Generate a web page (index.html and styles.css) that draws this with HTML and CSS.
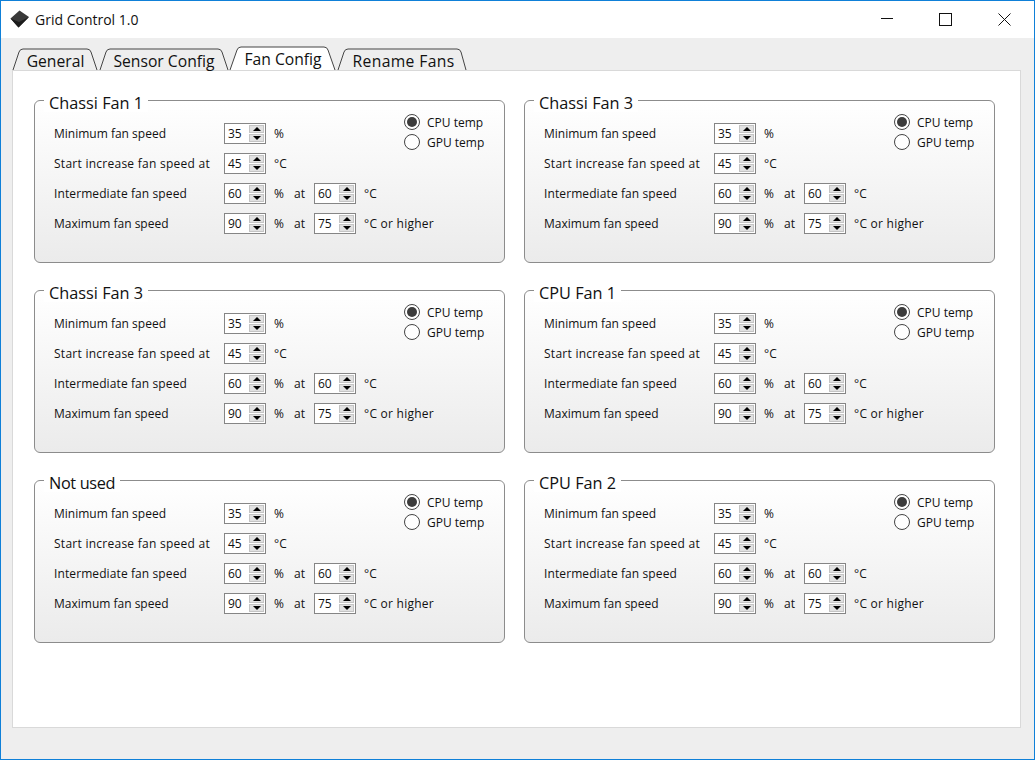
FILE: index.html
```html
<!DOCTYPE html>
<html lang="en">
<head>
    <meta charset="UTF-8">
    <meta name="viewport" content="width=device-width, initial-scale=1.0">
    <title>Grid Control 1.0</title>
    <link rel="stylesheet" href="styles.css">
</head>
<body>
<div class="window">
    <div class="titlebar">
        <svg class="app-icon" width="20" height="20" viewBox="0 0 20 20"><path d="M0.5 8.5 L9.5 0.5 L19 7 L8.5 17.5 Z" fill="#3a3a3a"/><path d="M0.5 8.5 L8.5 17.5 L19 7 L9 12 Z" fill="#1c1c1c"/></svg>
        <span class="app-name">Grid Control 1.0</span>
        <div class="win-btn"><svg width="13" height="13" viewBox="0 0 13 13"><path d="M1 5.5 H13" stroke="#111" fill="none"/></svg></div>
        <div class="win-btn"><svg width="13" height="13" viewBox="0 0 13 13"><rect x="0.5" y="0.5" width="12" height="12" stroke="#111" fill="none"/></svg></div>
        <div class="win-btn"><svg width="13" height="13" viewBox="0 0 13 13"><path d="M0.5 0.5 L12.5 12.5 M12.5 0.5 L0.5 12.5" stroke="#111" fill="none"/></svg></div>
    </div>
    <div class="main">
        <div class="tabs">
            <div class="tab tab-general">
                <svg width="87" height="24" viewBox="0 0 87 24"><path d="M1 23 L7 5 Q8 2 11 2 H75 Q78 2 79 5 L85 23" fill="#eee" stroke="#444"/></svg>
                <span>General</span>
            </div>
            <div class="tab tab-sensor">
                <svg width="131" height="24" viewBox="0 0 131 24"><path d="M1 23 L7 5 Q8 2 11 2 H119 Q122 2 123 5 L129 23" fill="#eee" stroke="#444"/></svg>
                <span>Sensor Config</span>
            </div>
            <div class="tab tab-fan active">
                <svg width="109" height="25" viewBox="0 0 109 25"><path d="M1 24 L8 4 Q9 1 12 1 H95 Q98 1 99 4 L106 24" fill="#fff" stroke="#444"/></svg>
                <span>Fan Config</span>
            </div>
            <div class="tab tab-rename">
                <svg width="131" height="24" viewBox="0 0 131 24"><path d="M1 23 L7 5 Q8 2 11 2 H120 Q123 2 124 5 L129 23" fill="#eee" stroke="#444"/></svg>
                <span>Rename Fans</span>
            </div>
        </div>
        <div class="pane">
            <div class="fan-grid">

                <div class="card">
                    <div class="card-title">Chassi Fan 1</div>
                    <div class="rows">
                        <div class="row"><span class="row-label">Minimum fan speed</span><div class="spin"><span class="spin-val">35</span><div class="spin-btns"><div class="spin-btn"><i class="arrow-up"></i></div><div class="spin-btn"><i class="arrow-down"></i></div></div></div><span class="unit">%</span></div>
                        <div class="row"><span class="row-label">Start increase fan speed at</span><div class="spin"><span class="spin-val">45</span><div class="spin-btns"><div class="spin-btn"><i class="arrow-up"></i></div><div class="spin-btn"><i class="arrow-down"></i></div></div></div><span>°C</span></div>
                        <div class="row"><span class="row-label">Intermediate fan speed</span><div class="spin"><span class="spin-val">60</span><div class="spin-btns"><div class="spin-btn"><i class="arrow-up"></i></div><div class="spin-btn"><i class="arrow-down"></i></div></div></div><span class="unit">%</span><span class="unit">at</span><div class="spin"><span class="spin-val">60</span><div class="spin-btns"><div class="spin-btn"><i class="arrow-up"></i></div><div class="spin-btn"><i class="arrow-down"></i></div></div></div><span>°C</span></div>
                        <div class="row"><span class="row-label">Maximum fan speed</span><div class="spin"><span class="spin-val">90</span><div class="spin-btns"><div class="spin-btn"><i class="arrow-up"></i></div><div class="spin-btn"><i class="arrow-down"></i></div></div></div><span class="unit">%</span><span class="unit">at</span><div class="spin"><span class="spin-val">75</span><div class="spin-btns"><div class="spin-btn"><i class="arrow-up"></i></div><div class="spin-btn"><i class="arrow-down"></i></div></div></div><span class="unit-long">°C or higher</span></div>
                    </div>
                    <div class="radios">
                        <div class="radio on"><span class="radio-dot"></span><span>CPU temp</span></div>
                        <div class="radio"><span class="radio-dot"></span><span>GPU temp</span></div>
                    </div>
                </div>

                <div class="card">
                    <div class="card-title">Chassi Fan 3</div>
                    <div class="rows">
                        <div class="row"><span class="row-label">Minimum fan speed</span><div class="spin"><span class="spin-val">35</span><div class="spin-btns"><div class="spin-btn"><i class="arrow-up"></i></div><div class="spin-btn"><i class="arrow-down"></i></div></div></div><span class="unit">%</span></div>
                        <div class="row"><span class="row-label">Start increase fan speed at</span><div class="spin"><span class="spin-val">45</span><div class="spin-btns"><div class="spin-btn"><i class="arrow-up"></i></div><div class="spin-btn"><i class="arrow-down"></i></div></div></div><span>°C</span></div>
                        <div class="row"><span class="row-label">Intermediate fan speed</span><div class="spin"><span class="spin-val">60</span><div class="spin-btns"><div class="spin-btn"><i class="arrow-up"></i></div><div class="spin-btn"><i class="arrow-down"></i></div></div></div><span class="unit">%</span><span class="unit">at</span><div class="spin"><span class="spin-val">60</span><div class="spin-btns"><div class="spin-btn"><i class="arrow-up"></i></div><div class="spin-btn"><i class="arrow-down"></i></div></div></div><span>°C</span></div>
                        <div class="row"><span class="row-label">Maximum fan speed</span><div class="spin"><span class="spin-val">90</span><div class="spin-btns"><div class="spin-btn"><i class="arrow-up"></i></div><div class="spin-btn"><i class="arrow-down"></i></div></div></div><span class="unit">%</span><span class="unit">at</span><div class="spin"><span class="spin-val">75</span><div class="spin-btns"><div class="spin-btn"><i class="arrow-up"></i></div><div class="spin-btn"><i class="arrow-down"></i></div></div></div><span class="unit-long">°C or higher</span></div>
                    </div>
                    <div class="radios">
                        <div class="radio on"><span class="radio-dot"></span><span>CPU temp</span></div>
                        <div class="radio"><span class="radio-dot"></span><span>GPU temp</span></div>
                    </div>
                </div>

                <div class="card">
                    <div class="card-title">Chassi Fan 3</div>
                    <div class="rows">
                        <div class="row"><span class="row-label">Minimum fan speed</span><div class="spin"><span class="spin-val">35</span><div class="spin-btns"><div class="spin-btn"><i class="arrow-up"></i></div><div class="spin-btn"><i class="arrow-down"></i></div></div></div><span class="unit">%</span></div>
                        <div class="row"><span class="row-label">Start increase fan speed at</span><div class="spin"><span class="spin-val">45</span><div class="spin-btns"><div class="spin-btn"><i class="arrow-up"></i></div><div class="spin-btn"><i class="arrow-down"></i></div></div></div><span>°C</span></div>
                        <div class="row"><span class="row-label">Intermediate fan speed</span><div class="spin"><span class="spin-val">60</span><div class="spin-btns"><div class="spin-btn"><i class="arrow-up"></i></div><div class="spin-btn"><i class="arrow-down"></i></div></div></div><span class="unit">%</span><span class="unit">at</span><div class="spin"><span class="spin-val">60</span><div class="spin-btns"><div class="spin-btn"><i class="arrow-up"></i></div><div class="spin-btn"><i class="arrow-down"></i></div></div></div><span>°C</span></div>
                        <div class="row"><span class="row-label">Maximum fan speed</span><div class="spin"><span class="spin-val">90</span><div class="spin-btns"><div class="spin-btn"><i class="arrow-up"></i></div><div class="spin-btn"><i class="arrow-down"></i></div></div></div><span class="unit">%</span><span class="unit">at</span><div class="spin"><span class="spin-val">75</span><div class="spin-btns"><div class="spin-btn"><i class="arrow-up"></i></div><div class="spin-btn"><i class="arrow-down"></i></div></div></div><span class="unit-long">°C or higher</span></div>
                    </div>
                    <div class="radios">
                        <div class="radio on"><span class="radio-dot"></span><span>CPU temp</span></div>
                        <div class="radio"><span class="radio-dot"></span><span>GPU temp</span></div>
                    </div>
                </div>

                <div class="card">
                    <div class="card-title">CPU Fan 1</div>
                    <div class="rows">
                        <div class="row"><span class="row-label">Minimum fan speed</span><div class="spin"><span class="spin-val">35</span><div class="spin-btns"><div class="spin-btn"><i class="arrow-up"></i></div><div class="spin-btn"><i class="arrow-down"></i></div></div></div><span class="unit">%</span></div>
                        <div class="row"><span class="row-label">Start increase fan speed at</span><div class="spin"><span class="spin-val">45</span><div class="spin-btns"><div class="spin-btn"><i class="arrow-up"></i></div><div class="spin-btn"><i class="arrow-down"></i></div></div></div><span>°C</span></div>
                        <div class="row"><span class="row-label">Intermediate fan speed</span><div class="spin"><span class="spin-val">60</span><div class="spin-btns"><div class="spin-btn"><i class="arrow-up"></i></div><div class="spin-btn"><i class="arrow-down"></i></div></div></div><span class="unit">%</span><span class="unit">at</span><div class="spin"><span class="spin-val">60</span><div class="spin-btns"><div class="spin-btn"><i class="arrow-up"></i></div><div class="spin-btn"><i class="arrow-down"></i></div></div></div><span>°C</span></div>
                        <div class="row"><span class="row-label">Maximum fan speed</span><div class="spin"><span class="spin-val">90</span><div class="spin-btns"><div class="spin-btn"><i class="arrow-up"></i></div><div class="spin-btn"><i class="arrow-down"></i></div></div></div><span class="unit">%</span><span class="unit">at</span><div class="spin"><span class="spin-val">75</span><div class="spin-btns"><div class="spin-btn"><i class="arrow-up"></i></div><div class="spin-btn"><i class="arrow-down"></i></div></div></div><span class="unit-long">°C or higher</span></div>
                    </div>
                    <div class="radios">
                        <div class="radio on"><span class="radio-dot"></span><span>CPU temp</span></div>
                        <div class="radio"><span class="radio-dot"></span><span>GPU temp</span></div>
                    </div>
                </div>

                <div class="card">
                    <div class="card-title">Not used</div>
                    <div class="rows">
                        <div class="row"><span class="row-label">Minimum fan speed</span><div class="spin"><span class="spin-val">35</span><div class="spin-btns"><div class="spin-btn"><i class="arrow-up"></i></div><div class="spin-btn"><i class="arrow-down"></i></div></div></div><span class="unit">%</span></div>
                        <div class="row"><span class="row-label">Start increase fan speed at</span><div class="spin"><span class="spin-val">45</span><div class="spin-btns"><div class="spin-btn"><i class="arrow-up"></i></div><div class="spin-btn"><i class="arrow-down"></i></div></div></div><span>°C</span></div>
                        <div class="row"><span class="row-label">Intermediate fan speed</span><div class="spin"><span class="spin-val">60</span><div class="spin-btns"><div class="spin-btn"><i class="arrow-up"></i></div><div class="spin-btn"><i class="arrow-down"></i></div></div></div><span class="unit">%</span><span class="unit">at</span><div class="spin"><span class="spin-val">60</span><div class="spin-btns"><div class="spin-btn"><i class="arrow-up"></i></div><div class="spin-btn"><i class="arrow-down"></i></div></div></div><span>°C</span></div>
                        <div class="row"><span class="row-label">Maximum fan speed</span><div class="spin"><span class="spin-val">90</span><div class="spin-btns"><div class="spin-btn"><i class="arrow-up"></i></div><div class="spin-btn"><i class="arrow-down"></i></div></div></div><span class="unit">%</span><span class="unit">at</span><div class="spin"><span class="spin-val">75</span><div class="spin-btns"><div class="spin-btn"><i class="arrow-up"></i></div><div class="spin-btn"><i class="arrow-down"></i></div></div></div><span class="unit-long">°C or higher</span></div>
                    </div>
                    <div class="radios">
                        <div class="radio on"><span class="radio-dot"></span><span>CPU temp</span></div>
                        <div class="radio"><span class="radio-dot"></span><span>GPU temp</span></div>
                    </div>
                </div>

                <div class="card">
                    <div class="card-title">CPU Fan 2</div>
                    <div class="rows">
                        <div class="row"><span class="row-label">Minimum fan speed</span><div class="spin"><span class="spin-val">35</span><div class="spin-btns"><div class="spin-btn"><i class="arrow-up"></i></div><div class="spin-btn"><i class="arrow-down"></i></div></div></div><span class="unit">%</span></div>
                        <div class="row"><span class="row-label">Start increase fan speed at</span><div class="spin"><span class="spin-val">45</span><div class="spin-btns"><div class="spin-btn"><i class="arrow-up"></i></div><div class="spin-btn"><i class="arrow-down"></i></div></div></div><span>°C</span></div>
                        <div class="row"><span class="row-label">Intermediate fan speed</span><div class="spin"><span class="spin-val">60</span><div class="spin-btns"><div class="spin-btn"><i class="arrow-up"></i></div><div class="spin-btn"><i class="arrow-down"></i></div></div></div><span class="unit">%</span><span class="unit">at</span><div class="spin"><span class="spin-val">60</span><div class="spin-btns"><div class="spin-btn"><i class="arrow-up"></i></div><div class="spin-btn"><i class="arrow-down"></i></div></div></div><span>°C</span></div>
                        <div class="row"><span class="row-label">Maximum fan speed</span><div class="spin"><span class="spin-val">90</span><div class="spin-btns"><div class="spin-btn"><i class="arrow-up"></i></div><div class="spin-btn"><i class="arrow-down"></i></div></div></div><span class="unit">%</span><span class="unit">at</span><div class="spin"><span class="spin-val">75</span><div class="spin-btns"><div class="spin-btn"><i class="arrow-up"></i></div><div class="spin-btn"><i class="arrow-down"></i></div></div></div><span class="unit-long">°C or higher</span></div>
                    </div>
                    <div class="radios">
                        <div class="radio on"><span class="radio-dot"></span><span>CPU temp</span></div>
                        <div class="radio"><span class="radio-dot"></span><span>GPU temp</span></div>
                    </div>
                </div>

            </div>
        </div>
    </div>
</div>
</body>
</html>
```

FILE: styles.css
```css
* {
    box-sizing: border-box;
}
html, body {
    margin: 0;
    height: 100%;
}
body {
    font-family: "Open Sans", "Noto Sans", sans-serif;
    font-size: 12px;
    color: #111;
    background: #eee;
}
.window {
    width: 1035px;
    height: 760px;
    border: 1px solid #0f80d8;
    display: flex;
    flex-direction: column;
}
.titlebar {
    height: 37px;
    background: #fff;
    display: flex;
    align-items: center;
    flex-shrink: 0;
}
.app-icon {
    margin-left: 9px;
}
.app-name {
    margin-left: 5px;
    font-size: 14px;
    flex-grow: 1;
}
.win-btn {
    width: 59px;
    display: flex;
    justify-content: center;
}
.main {
    flex-grow: 1;
    padding: 9px 12px 0 11px;
    display: flex;
    flex-direction: column;
}
.tabs {
    display: flex;
    height: 23px;
    position: relative;
    z-index: 1;
}
.tab {
    position: relative;
    font-size: 15.7px;
    line-height: 22px;
    text-align: center;
    white-space: nowrap;
}
.tab svg {
    position: absolute;
    left: 0;
    bottom: -1px;
}
.tab span {
    position: relative;
    display: block;
    padding-top: 3px;
}
.tab-general { width: 87px; }
.tab-sensor { width: 130px; }
.tab-fan { width: 108px; }
.tab-rename {
    width: 133px;
    letter-spacing: 0.35px;
}
.tab.active span {
    padding-top: 1px;
}
.pane {
    width: 1009px;
    height: 658px;
    background: #fff;
    border: 1px solid #d9d9d9;
    padding: 29px 0 0 21px;
}
.fan-grid {
    display: grid;
    grid-template-columns: 471px 471px;
    grid-auto-rows: 163px;
    column-gap: 19px;
    row-gap: 27px;
}
.card {
    position: relative;
    border: 1px solid #8c8c8c;
    border-radius: 6px;
    background: linear-gradient(#fff, #ebebeb);
    padding: 22px 0 0 19px;
    display: flex;
}
.card-title {
    position: absolute;
    top: -7px;
    left: 9px;
    padding: 0 5px;
    background: #fff;
    font-size: 16.3px;
    line-height: 18px;
    white-space: nowrap;
}
.card:nth-child(5) .card-title {
    letter-spacing: -0.35px;
}
.rows {
    width: 350px;
    flex-shrink: 0;
    display: flex;
    flex-direction: column;
    gap: 9px;
}
.row {
    display: flex;
    align-items: center;
    height: 21px;
    gap: 8px;
    white-space: nowrap;
}
.row > * {
    flex-shrink: 0;
}
.row-label {
    width: 162px;
}
.row:nth-child(2) .row-label {
    letter-spacing: 0.26px;
}
.row:nth-child(3) .row-label {
    letter-spacing: 0.1px;
}
.unit {
    width: 12px;
}
.unit-long {
    letter-spacing: 0.25px;
}
.spin {
    width: 42px;
    height: 21px;
    border: 1px solid #858585;
    background: #fff;
    display: flex;
    justify-content: space-between;
    padding: 1px;
    line-height: 18px;
}
.spin-val {
    padding-left: 2px;
}
.spin-btns {
    width: 15px;
    display: flex;
    flex-direction: column;
    gap: 1px;
}
.spin-btn {
    flex: 1;
    background: #e1e1e1;
    border: 1px solid #c4c4c4;
    display: flex;
    align-items: center;
    justify-content: center;
}
.arrow-up {
    width: 0;
    height: 0;
    border: 4px solid transparent;
    border-top: 0;
    border-bottom: 4px solid #000;
}
.arrow-down {
    width: 0;
    height: 0;
    border: 4px solid transparent;
    border-bottom: 0;
    border-top: 4px solid #000;
}
.radios {
    display: flex;
    flex-direction: column;
    gap: 4px;
    margin-top: -9px;
}
.radio {
    display: flex;
    align-items: center;
    gap: 7px;
    height: 16px;
    white-space: nowrap;
}
.radio-dot {
    width: 16px;
    height: 16px;
    border: 1px solid #444;
    border-radius: 50%;
    background: #fff;
    display: flex;
    align-items: center;
    justify-content: center;
}
.radio.on .radio-dot::after {
    content: "";
    width: 10px;
    height: 10px;
    border-radius: 50%;
    background: #3c3c3c;
}
```
